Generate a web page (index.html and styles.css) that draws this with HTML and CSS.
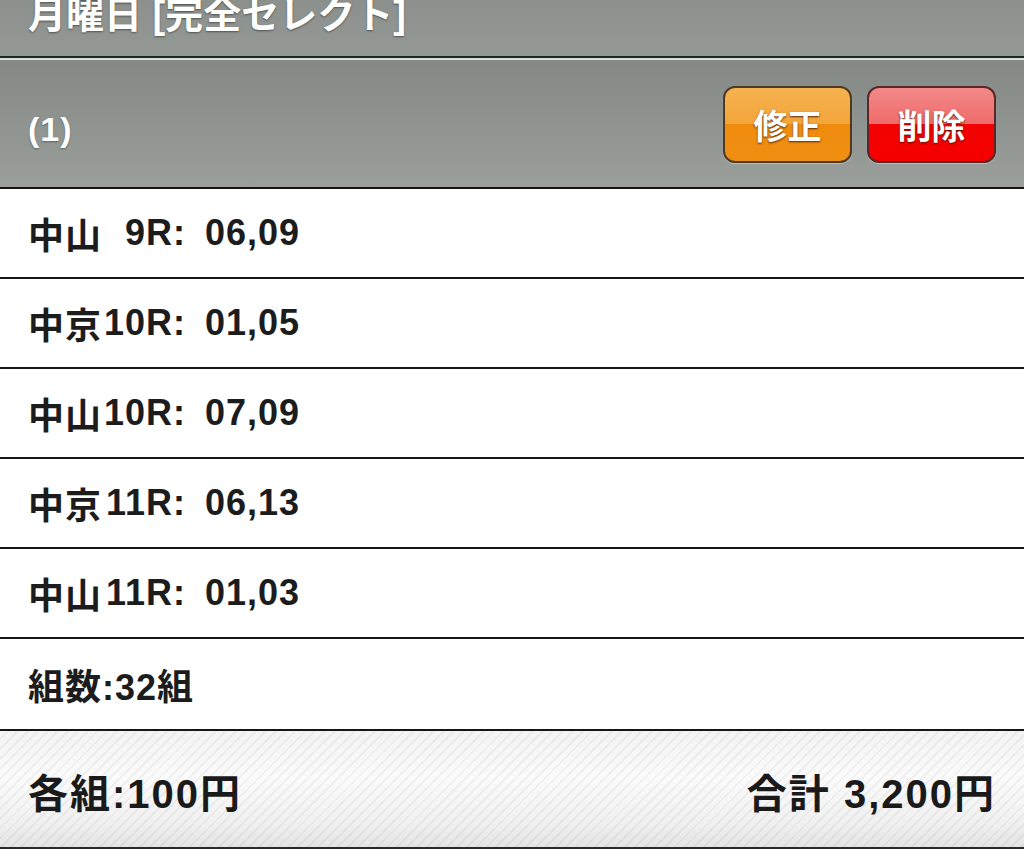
FILE: index.html
```html
<!DOCTYPE html>
<html lang="ja">
<head>
<meta charset="utf-8">
<title>完全セレクト</title>
<link rel="stylesheet" href="styles.css">
</head>
<body>
<div class="title-bar">月曜日 [完全セレクト]</div>
<div class="entry-head">
  <span class="entry-no">(1)</span>
  <div class="actions">
    <span class="btn btn-edit">修正</span>
    <span class="btn btn-delete">削除</span>
  </div>
</div>
<ul class="rows">
  <li class="row">中山<span class="race">9R:</span> 06,09</li>
  <li class="row">中京<span class="race">10R:</span> 01,05</li>
  <li class="row">中山<span class="race">10R:</span> 07,09</li>
  <li class="row">中京<span class="race">11R:</span> 06,13</li>
  <li class="row">中山<span class="race">11R:</span> 01,03</li>
  <li class="row row-count">組数:32組</li>
</ul>
<div class="summary">
  <span class="each">各組:100円</span>
  <span class="total">合計 3,200円</span>
</div>
</body>
</html>
```

FILE: styles.css
```css
html, body {
  margin: 0;
  padding: 0;
  background: #ffffff;
}
body {
  font-family: "Liberation Sans", "Noto Sans CJK JP", sans-serif;
  font-weight: bold;
  color: #1c1c1c;
  width: 1024px;
  height: 867px;
  overflow: hidden;
}
.title-bar {
  box-sizing: border-box;
  height: 58px;
  padding: 0 28px;
  font-size: 38px;
  line-height: 30px;
  color: #ffffff;
  text-shadow: 0 1px 2px rgba(0, 0, 0, 0.45);
  background: linear-gradient(to bottom, #8b908d, #949996);
  border-bottom: 2px solid #1d2823;
  overflow: hidden;
}
.entry-head {
  box-sizing: border-box;
  height: 131px;
  display: flex;
  align-items: center;
  justify-content: space-between;
  padding: 2px 28px 0;
  background: linear-gradient(to bottom, #848986, #9a9f9c);
  border-top: 2px solid #d9e0dc;
  border-bottom: 2px solid #151515;
}
.entry-no {
  font-size: 34px;
  letter-spacing: 1px;
  color: #ffffff;
  text-shadow: 0 1px 2px rgba(0, 0, 0, 0.35);
  margin-top: 10px;
}
.actions {
  display: flex;
  gap: 15px;
}
.btn {
  box-sizing: border-box;
  width: 129px;
  height: 77px;
  display: flex;
  align-items: center;
  justify-content: center;
  font-size: 34px;
  color: #ffffff;
  text-shadow: 0 1px 2px rgba(60, 20, 0, 0.85);
  border-radius: 12px;
  box-shadow: 0 1px 1px rgba(255, 255, 255, 0.35);
}
.btn-edit {
  background: linear-gradient(to bottom, #f6b251 0%, #f3a539 50%, #ef8c0e 50%, #f08f12 100%);
  border: 2px solid #4d3a22;
}
.btn-delete {
  background: linear-gradient(to bottom, #f28989 0%, #f06a6a 50%, #f20202 50%, #f50000 100%);
  border: 2px solid #5b2626;
}
.rows {
  list-style: none;
  margin: 0;
  padding: 0;
}
.row {
  box-sizing: border-box;
  height: 90px;
  display: flex;
  align-items: center;
  padding: 0 28px;
  font-size: 36px;
  letter-spacing: 1px;
  white-space: pre;
  border-bottom: 2px solid #151515;
}
.row-count {
  height: 92px;
}
.race {
  display: inline-block;
  width: 84px;
  text-align: right;
  margin-right: 8px;
}
.summary {
  box-sizing: border-box;
  height: 118px;
  display: flex;
  align-items: center;
  justify-content: space-between;
  padding: 4px 28px 0 28px;
  font-size: 40px;
  letter-spacing: 2px;
  color: #1a1a1a;
  background:
    repeating-linear-gradient(135deg, rgba(0, 0, 0, 0) 0px, rgba(0, 0, 0, 0) 5px, rgba(0, 0, 0, 0.045) 5px, rgba(0, 0, 0, 0.045) 7px),
    linear-gradient(to bottom, #f3f3f3, #fbfbfb 40%, #f0f0f0 80%, #e4e4e4);
  border-bottom: 2px solid #2a2a2a;
}
```
